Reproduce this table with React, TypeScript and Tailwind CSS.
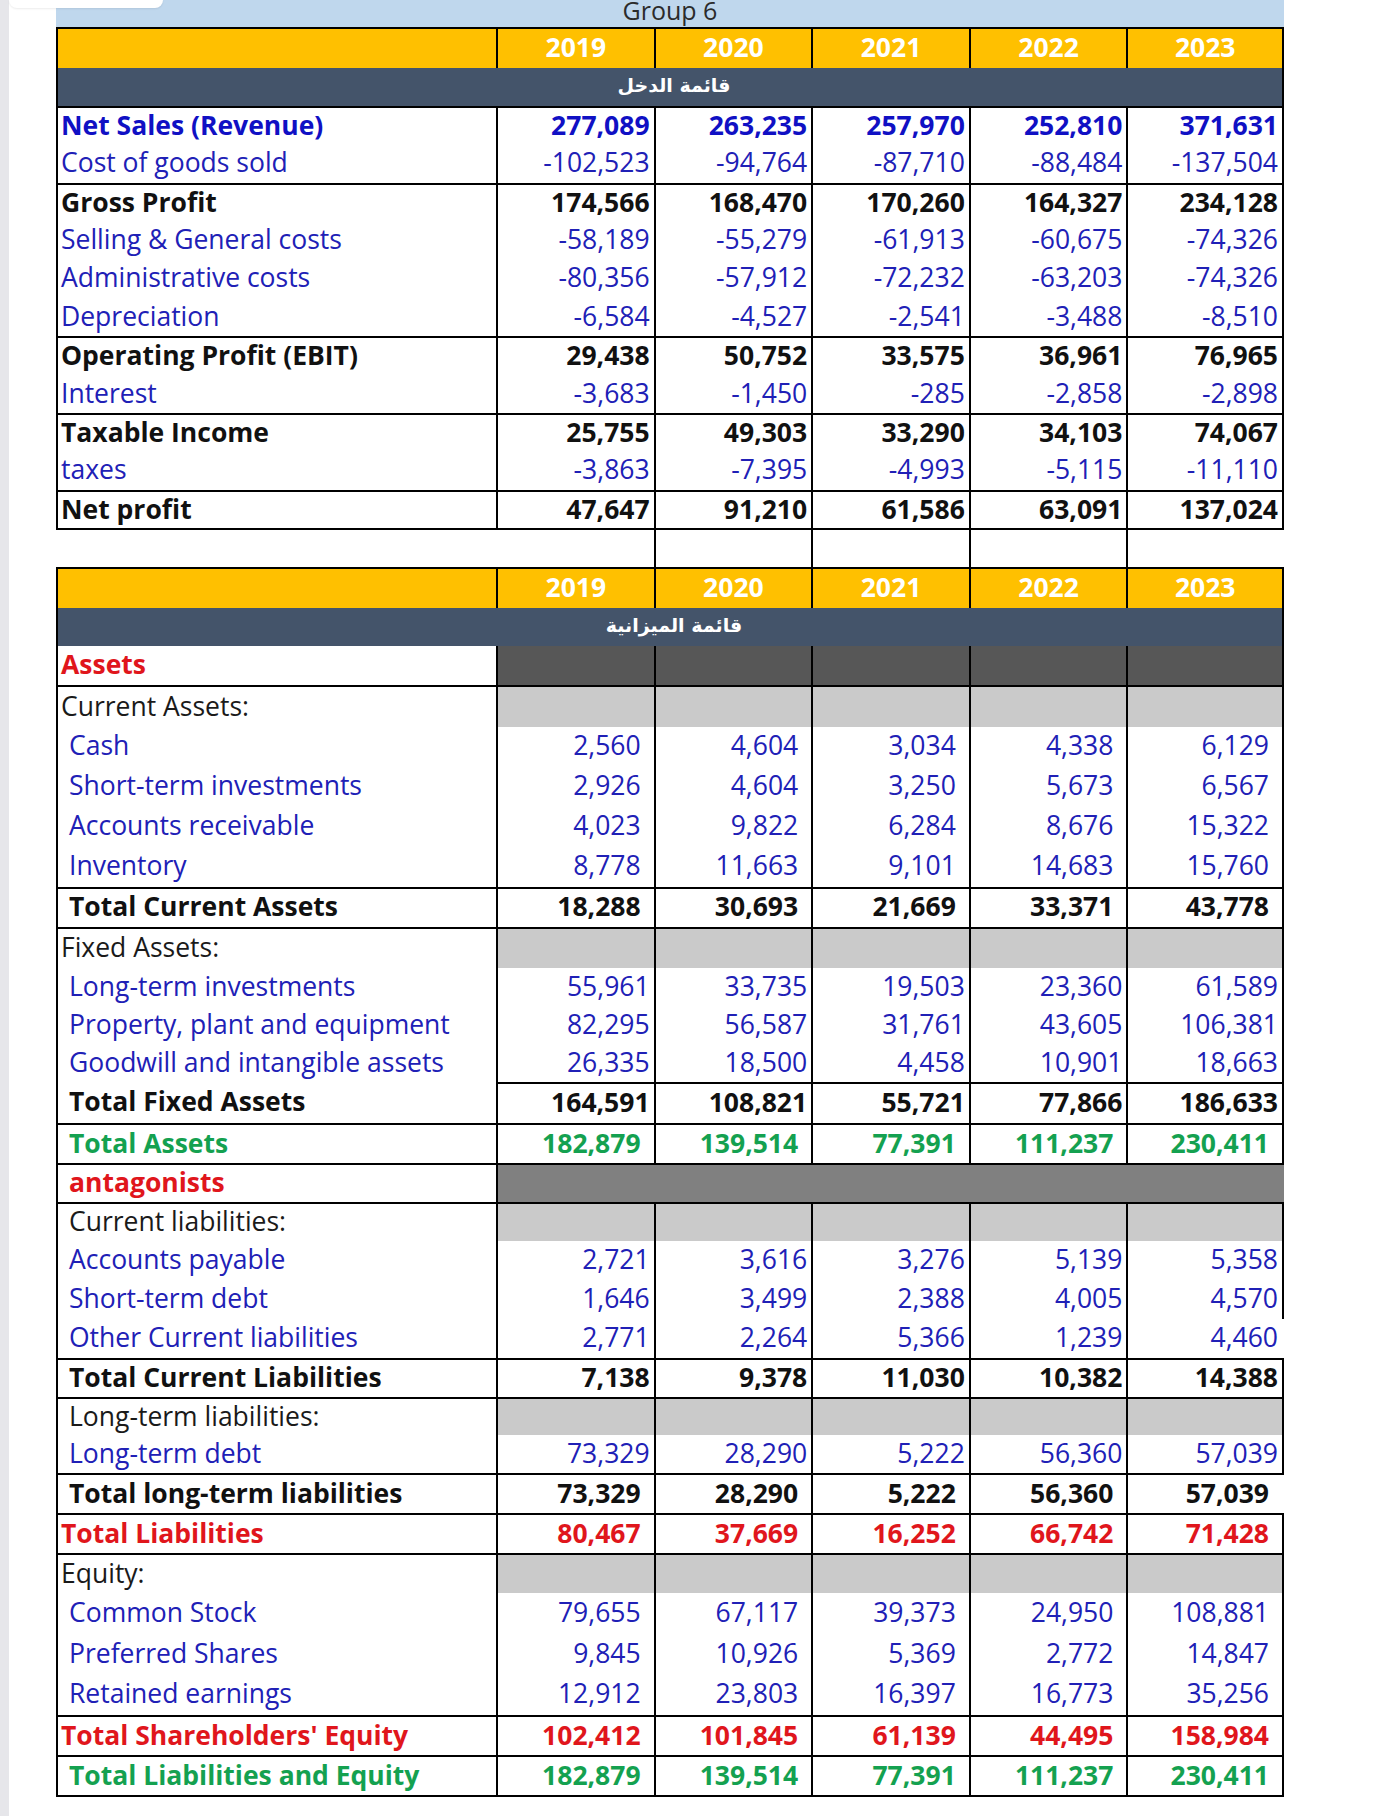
import React from 'react';

type Tone = 'blue' | 'blueBold' | 'bold' | 'red' | 'green' | 'plain';

const toneClass: Record<Tone, string> = {
	blue: 'font-normal text-[#2020b6]',
	blueBold: 'font-bold text-[#1010c4]',
	bold: 'font-bold text-[#111111]',
	red: 'font-bold text-[#e0161c]',
	green: 'font-bold text-[#14a150]',
	plain: 'font-normal text-[#1a1a1a]'
};

const years = ['2019', '2020', '2021', '2022', '2023'];
const cols = 'grid grid-cols-[438px_repeat(5,minmax(0,1fr))]';

type IncomeRow = { label: string; tone: Tone; values: string[]; top?: boolean };

const income: IncomeRow[] = [
	{ label: 'Net Sales (Revenue)', tone: 'blueBold', top: true, values: ['277,089', '263,235', '257,970', '252,810', '371,631'] },
	{ label: 'Cost of goods sold', tone: 'blue', values: ['-102,523', '-94,764', '-87,710', '-88,484', '-137,504'] },
	{ label: 'Gross Profit', tone: 'bold', top: true, values: ['174,566', '168,470', '170,260', '164,327', '234,128'] },
	{ label: 'Selling & General costs', tone: 'blue', values: ['-58,189', '-55,279', '-61,913', '-60,675', '-74,326'] },
	{ label: 'Administrative costs', tone: 'blue', values: ['-80,356', '-57,912', '-72,232', '-63,203', '-74,326'] },
	{ label: 'Depreciation', tone: 'blue', values: ['-6,584', '-4,527', '-2,541', '-3,488', '-8,510'] },
	{ label: 'Operating Profit (EBIT)', tone: 'bold', top: true, values: ['29,438', '50,752', '33,575', '36,961', '76,965'] },
	{ label: 'Interest', tone: 'blue', values: ['-3,683', '-1,450', '-285', '-2,858', '-2,898'] },
	{ label: 'Taxable Income', tone: 'bold', top: true, values: ['25,755', '49,303', '33,290', '34,103', '74,067'] },
	{ label: 'taxes', tone: 'blue', values: ['-3,863', '-7,395', '-4,993', '-5,115', '-11,110'] },
	{ label: 'Net profit', tone: 'bold', top: true, values: ['47,647', '91,210', '61,586', '63,091', '137,024'] }
];

type Fill = 'dark' | 'gray' | 'merged';

type BalanceRow = {
	label: string;
	tone: Tone;
	h: string;
	indent?: boolean;
	values?: string[];
	fill?: Fill;
	pad?: boolean;
	top?: 'full' | 'years';
	noRight?: boolean;
};

const balance: BalanceRow[] = [
	{ label: 'Assets', tone: 'red', h: 'h-[39px]', fill: 'dark' },
	{ label: 'Current Assets:', tone: 'plain', h: 'h-[41.7px]', fill: 'gray', top: 'full' },
	{ label: 'Cash', tone: 'blue', h: 'h-[40px]', indent: true, pad: true, values: ['2,560', '4,604', '3,034', '4,338', '6,129'] },
	{ label: 'Short-term investments', tone: 'blue', h: 'h-[40px]', indent: true, pad: true, values: ['2,926', '4,604', '3,250', '5,673', '6,567'] },
	{ label: 'Accounts receivable', tone: 'blue', h: 'h-[40px]', indent: true, pad: true, values: ['4,023', '9,822', '6,284', '8,676', '15,322'] },
	{ label: 'Inventory', tone: 'blue', h: 'h-[40px]', indent: true, pad: true, values: ['8,778', '11,663', '9,101', '14,683', '15,760'] },
	{ label: 'Total Current Assets', tone: 'bold', h: 'h-[40px]', indent: true, pad: true, top: 'full', values: ['18,288', '30,693', '21,669', '33,371', '43,778'] },
	{ label: 'Fixed Assets:', tone: 'plain', h: 'h-[41.6px]', fill: 'gray', top: 'full' },
	{ label: 'Long-term investments', tone: 'blue', h: 'h-[37.8px]', indent: true, values: ['55,961', '33,735', '19,503', '23,360', '61,589'] },
	{ label: 'Property, plant and equipment', tone: 'blue', h: 'h-[37.8px]', indent: true, values: ['82,295', '56,587', '31,761', '43,605', '106,381'] },
	{ label: 'Goodwill and intangible assets', tone: 'blue', h: 'h-[37.8px]', indent: true, values: ['26,335', '18,500', '4,458', '10,901', '18,663'] },
	{ label: 'Total Fixed Assets', tone: 'bold', h: 'h-[41.6px]', indent: true, top: 'years', values: ['164,591', '108,821', '55,721', '77,866', '186,633'] },
	{ label: 'Total Assets', tone: 'green', h: 'h-[40px]', indent: true, pad: true, top: 'full', values: ['182,879', '139,514', '77,391', '111,237', '230,411'] },
	{ label: 'antagonists', tone: 'red', h: 'h-[38.4px]', indent: true, fill: 'merged', top: 'full' },
	{ label: 'Current liabilities:', tone: 'plain', h: 'h-[39px]', indent: true, fill: 'gray', top: 'full' },
	{ label: 'Accounts payable', tone: 'blue', h: 'h-[39.2px]', indent: true, values: ['2,721', '3,616', '3,276', '5,139', '5,358'] },
	{ label: 'Short-term debt', tone: 'blue', h: 'h-[39.2px]', indent: true, values: ['1,646', '3,499', '2,388', '4,005', '4,570'] },
	{ label: 'Other Current liabilities', tone: 'blue', h: 'h-[39.2px]', indent: true, noRight: true, values: ['2,771', '2,264', '5,366', '1,239', '4,460'] },
	{ label: 'Total Current Liabilities', tone: 'bold', h: 'h-[38.4px]', indent: true, top: 'full', values: ['7,138', '9,378', '11,030', '10,382', '14,388'] },
	{ label: 'Long-term liabilities:', tone: 'plain', h: 'h-[38.3px]', indent: true, fill: 'gray', top: 'full' },
	{ label: 'Long-term debt', tone: 'blue', h: 'h-[38.3px]', indent: true, values: ['73,329', '28,290', '5,222', '56,360', '57,039'] },
	{ label: 'Total long-term liabilities', tone: 'bold', h: 'h-[40px]', indent: true, pad: true, top: 'full', noRight: true, values: ['73,329', '28,290', '5,222', '56,360', '57,039'] },
	{ label: 'Total Liabilities', tone: 'red', h: 'h-[40px]', pad: true, top: 'full', values: ['80,467', '37,669', '16,252', '66,742', '71,428'] },
	{ label: 'Equity:', tone: 'plain', h: 'h-[40px]', fill: 'gray', top: 'full' },
	{ label: 'Common Stock', tone: 'blue', h: 'h-[40.6px]', indent: true, pad: true, values: ['79,655', '67,117', '39,373', '24,950', '108,881'] },
	{ label: 'Preferred Shares', tone: 'blue', h: 'h-[40.6px]', indent: true, pad: true, values: ['9,845', '10,926', '5,369', '2,772', '14,847'] },
	{ label: 'Retained earnings', tone: 'blue', h: 'h-[40.5px]', indent: true, pad: true, values: ['12,912', '23,803', '16,397', '16,773', '35,256'] },
	{ label: "Total Shareholders' Equity", tone: 'red', h: 'h-[40px]', pad: true, top: 'full', values: ['102,412', '101,845', '61,139', '44,495', '158,984'] },
	{ label: 'Total Liabilities and Equity', tone: 'green', h: 'h-[42px]', indent: true, pad: true, top: 'full', values: ['182,879', '139,514', '77,391', '111,237', '230,411'] }
];

function YearHeader() {
	return (
		<div className={`${cols} h-[41.6px] border-l-2 border-t-2 border-black bg-[#ffc000]`}>
			<div />
			{years.map((y, i) => (
				<div
					key={y}
					className={`flex items-center justify-center border-l-2 border-black pb-[3px] text-[26.5px] font-bold leading-none text-white ${
						i === 4 ? 'border-r-2' : ''
					}`}
				>
					{y}
				</div>
			))}
		</div>
	);
}

function SectionBar({ title }: { title: string }) {
	return (
		<div className="flex h-[37.7px] items-center justify-center border-x-2 border-black bg-[#44546a] pb-[4px] pl-[8px]">
			<span className="font-['DejaVu_Sans',sans-serif] text-[19px] font-bold leading-none text-white" dir="rtl">
				{title}
			</span>
		</div>
	);
}

function IncomeTable() {
	return (
		<div>
			<YearHeader />
			<SectionBar title="قائمة الدخل" />
			{income.map((row, r) => {
				const last = r === income.length - 1;
				return (
					<div
						key={row.label}
						className={`${cols} border-l-2 border-black bg-white ${row.top ? 'border-t-2' : ''} ${
							last ? 'h-[40.4px] border-b-2' : 'h-[38.4px]'
						}`}
					>
						<div className={`flex items-center whitespace-nowrap pb-[2px] pl-[3px] text-[26.5px] leading-none ${toneClass[row.tone]}`}>
							{row.label}
						</div>
						{row.values.map((v, i) => (
							<div
								key={i}
								className={`flex items-center justify-end border-l-2 border-black pb-[2px] pr-[4px] text-[26.5px] leading-none ${
									toneClass[row.tone]
								} ${i === 4 ? 'border-r-2' : ''}`}
							>
								{v}
							</div>
						))}
					</div>
				);
			})}
		</div>
	);
}

function Gap() {
	return (
		<div className={`${cols} h-[36.5px] border-l-2 border-transparent`}>
			<div />
			<div />
			<div className="border-l-2 border-black" />
			<div className="border-l-2 border-black" />
			<div className="border-l-2 border-black" />
			<div className="border-l-2 border-black" />
		</div>
	);
}

function BalanceTable() {
	return (
		<div>
			<YearHeader />
			<SectionBar title="قائمة الميزانية" />
			{balance.map((row, r) => {
				const last = r === balance.length - 1;
				const tone = toneClass[row.tone];
				return (
					<div
						key={row.label}
						className={`${cols} ${row.h} border-l-2 border-black bg-white ${row.top === 'full' ? 'border-t-2' : ''} ${
							last ? 'border-b-2' : ''
						}`}
					>
						<div
							className={`flex items-center whitespace-nowrap pb-[2px] text-[26.5px] leading-none ${tone} ${
								row.indent ? 'pl-[11px]' : 'pl-[3px]'
							}`}
						>
							{row.label}
						</div>
						{row.fill === 'merged' ? (
							<div className="col-span-5 border-l-2 border-black bg-[#808080]" />
						) : row.fill ? (
							years.map((y, i) => (
								<div
									key={y}
									className={`border-l-2 border-black ${row.fill === 'dark' ? 'bg-[#575757]' : 'bg-[#cacaca]'} ${
										i === 4 ? 'border-r-2' : ''
									}`}
								/>
							))
						) : (
							(row.values ?? []).map((v, i) => (
								<div
									key={i}
									className={`flex items-center justify-end border-l-2 border-black pb-[2px] text-[26.5px] leading-none ${tone} ${
										row.pad ? 'pr-[13px]' : 'pr-[4px]'
									} ${row.top === 'years' ? 'border-t-2' : ''} ${
										i === 4 ? (row.noRight ? 'border-r-2 border-r-transparent' : 'border-r-2') : ''
									}`}
								>
									{v}
								</div>
							))
						)}
					</div>
				);
			})}
		</div>
	);
}

export default function App() {
	return (
		<div className="relative flex min-h-[1816px] w-[1382px] bg-white font-['Open_Sans',sans-serif]">
			<div className="w-[9px] shrink-0 bg-[#e6e6ea]" />
			{/* leftover tab edge over the header band */}
			<div className="absolute left-[9px] top-0 h-[8px] w-[154px] rounded-b-[10px] bg-white shadow-[0_1px_2px_rgba(0,0,0,0.08)]" />
			<div className="ml-[47px] w-[1228px]">
				<div className="flex h-[26.7px] justify-center bg-[#bfd7ed]">
					<span className="text-[25px] leading-[20px] text-[#2b2b2b]">Group 6</span>
				</div>
				<IncomeTable />
				<Gap />
				<BalanceTable />
			</div>
		</div>
	);
}
